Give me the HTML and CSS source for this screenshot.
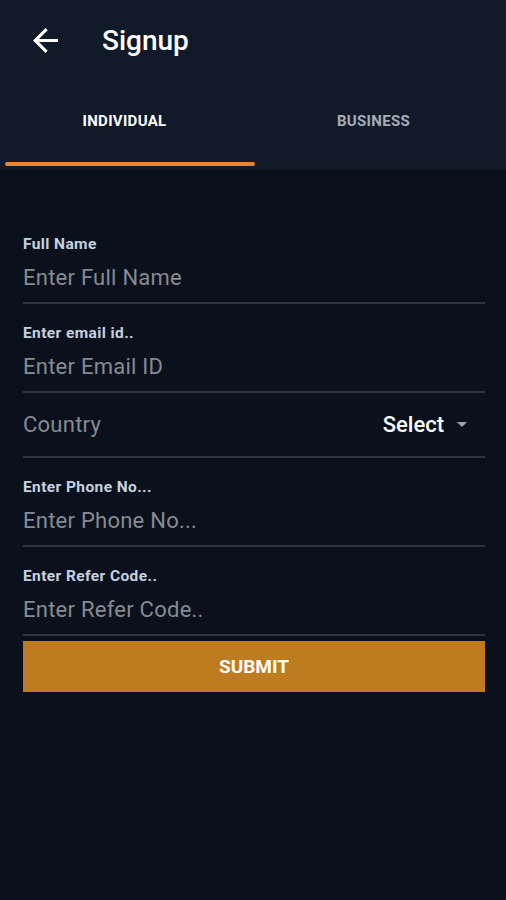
FILE: index.html
```html
<!DOCTYPE html>
<html lang="en">
<head>
  <meta charset="UTF-8">
  <meta name="viewport" content="width=device-width, initial-scale=1.0">
  <title>Signup</title>
  <link rel="stylesheet" href="styles.css">
</head>
<body>
  <header class="header">
    <div class="toolbar">
      <button class="back" aria-label="Back">
        <svg width="25" height="25" viewBox="4 4 16 16">
          <path d="M20 11H7.83l5.59-5.59L12 4l-8 8 8 8 1.41-1.41L7.83 13H20v-2z" fill="#ffffff"/>
        </svg>
      </button>
      <h1 class="title">Signup</h1>
    </div>
    <div class="tabs">
      <div class="tab active">INDIVIDUAL</div>
      <div class="tab">BUSINESS</div>
    </div>
    <div class="indicator"></div>
  </header>

  <form class="form">
    <div class="field">
      <label class="label">Full Name</label>
      <input class="input" type="text" placeholder="Enter Full Name">
    </div>
    <div class="field">
      <label class="label">Enter email id..</label>
      <input class="input" type="text" placeholder="Enter Email ID">
    </div>
    <div class="field country">
      <span class="country-label">Country</span>
      <span class="select">Select <span class="caret"></span></span>
    </div>
    <div class="field">
      <label class="label">Enter Phone No...</label>
      <input class="input" type="text" placeholder="Enter Phone No...">
    </div>
    <div class="field">
      <label class="label">Enter Refer Code..</label>
      <input class="input" type="text" placeholder="Enter Refer Code..">
    </div>
    <button class="submit" type="button">SUBMIT</button>
  </form>
</body>
</html>
```

FILE: styles.css
```css
body {
  font-family: Roboto, "Liberation Sans", sans-serif;
  background-color: #0a111c;
  margin: 0;
  height: 900px;
}

.header {
  background: #111a29;
  padding-bottom: 4px;
}

.toolbar {
  display: flex;
  align-items: center;
  height: 80px;
}

.back {
  background: none;
  border: none;
  padding: 0;
  margin-left: 33px;
  width: 25px;
  height: 25px;
  display: flex;
}

.title {
  margin: 0 0 0 44px;
  color: #ffffff;
  font-size: 28px;
  font-weight: 500;
}

.tabs {
  display: flex;
  width: 498px;
}

.tab {
  flex: 1;
  height: 82px;
  display: flex;
  align-items: center;
  justify-content: center;
  font-size: 15px;
  font-weight: 700;
  letter-spacing: 0.3px;
  color: #a7adb7;
}

.tab.active {
  color: #ffffff;
}

.indicator {
  margin-left: 5px;
  width: 250px;
  height: 4px;
  border-radius: 2px;
  background: #e8842f;
}

.form {
  padding: 65px 21px 0 23px;
}

.field {
  border-bottom: 2px solid #2d343f;
  padding: 0 0 11px;
  margin-bottom: 20px;
}

.label {
  display: block;
  color: #c6d2e0;
  font-size: 15.5px;
  font-weight: 700;
  letter-spacing: 0.4px;
  line-height: 18px;
  margin-bottom: 12px;
}

.input {
  display: block;
  width: 100%;
  box-sizing: border-box;
  background: none;
  border: none;
  outline: none;
  padding: 0;
  font-family: inherit;
  font-size: 22px;
  letter-spacing: 0.25px;
  line-height: 26px;
  color: #ffffff;
}

.input::placeholder {
  color: #878b92;
}

.country {
  display: flex;
  align-items: center;
  justify-content: space-between;
  height: 48px;
  margin-top: -20px;
  padding: 7px 18px 8px 0;
}

.country-label {
  color: #878b92;
  font-size: 22px;
  letter-spacing: 0.25px;
}

.select {
  display: flex;
  align-items: center;
  color: #ffffff;
  font-size: 22px;
  font-weight: 500;
}

.caret {
  margin-left: 13px;
  width: 0;
  height: 0;
  border-left: 5px solid transparent;
  border-right: 5px solid transparent;
  border-top: 5px solid #a0a4aa;
}

.field:last-of-type {
  margin-bottom: 5px;
}

.submit {
  display: block;
  width: 100%;
  height: 51px;
  background: #bf7b20;
  border: none;
  color: #ffffff;
  font-family: inherit;
  font-size: 19px;
  font-weight: 700;
}
```
